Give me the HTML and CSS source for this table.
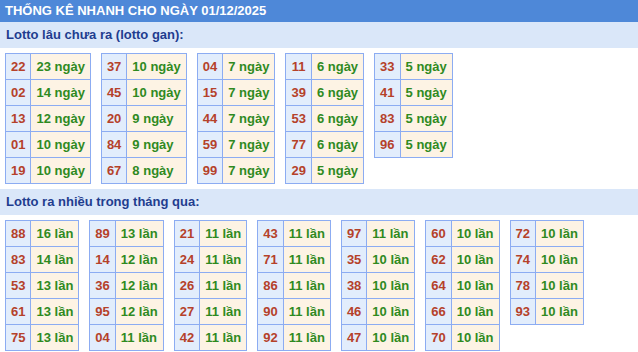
FILE: index.html
```html
<!DOCTYPE html>
<html lang="vi">
<head>
<meta charset="utf-8">
<title>Thống kê nhanh</title>
<link rel="stylesheet" href="styles.css">
</head>
<body>
<div class="title">THỐNG KÊ NHANH CHO NGÀY 01/12/2025</div>

<div class="section">Lotto lâu chưa ra (lotto gan):</div>
<div class="tables">
  <table><tr><td class="n">22</td><td class="v">23 ngày</td></tr><tr><td class="n">02</td><td class="v">14 ngày</td></tr><tr><td class="n">13</td><td class="v">12 ngày</td></tr><tr><td class="n">01</td><td class="v">10 ngày</td></tr><tr><td class="n">19</td><td class="v">10 ngày</td></tr></table>
  <table><tr><td class="n">37</td><td class="v">10 ngày</td></tr><tr><td class="n">45</td><td class="v">10 ngày</td></tr><tr><td class="n">20</td><td class="v">9 ngày</td></tr><tr><td class="n">84</td><td class="v">9 ngày</td></tr><tr><td class="n">67</td><td class="v">8 ngày</td></tr></table>
  <table><tr><td class="n">04</td><td class="v">7 ngày</td></tr><tr><td class="n">15</td><td class="v">7 ngày</td></tr><tr><td class="n">44</td><td class="v">7 ngày</td></tr><tr><td class="n">59</td><td class="v">7 ngày</td></tr><tr><td class="n">99</td><td class="v">7 ngày</td></tr></table>
  <table><tr><td class="n">11</td><td class="v">6 ngày</td></tr><tr><td class="n">39</td><td class="v">6 ngày</td></tr><tr><td class="n">53</td><td class="v">6 ngày</td></tr><tr><td class="n">77</td><td class="v">6 ngày</td></tr><tr><td class="n">29</td><td class="v">5 ngày</td></tr></table>
  <table><tr><td class="n">33</td><td class="v">5 ngày</td></tr><tr><td class="n">41</td><td class="v">5 ngày</td></tr><tr><td class="n">83</td><td class="v">5 ngày</td></tr><tr><td class="n">96</td><td class="v">5 ngày</td></tr></table>
</div>

<div class="section">Lotto ra nhiều trong tháng qua:</div>
<div class="tables">
  <table><tr><td class="n">88</td><td class="v">16 lần</td></tr><tr><td class="n">83</td><td class="v">14 lần</td></tr><tr><td class="n">53</td><td class="v">13 lần</td></tr><tr><td class="n">61</td><td class="v">13 lần</td></tr><tr><td class="n">75</td><td class="v">13 lần</td></tr></table>
  <table><tr><td class="n">89</td><td class="v">13 lần</td></tr><tr><td class="n">14</td><td class="v">12 lần</td></tr><tr><td class="n">36</td><td class="v">12 lần</td></tr><tr><td class="n">95</td><td class="v">12 lần</td></tr><tr><td class="n">04</td><td class="v">11 lần</td></tr></table>
  <table><tr><td class="n">21</td><td class="v">11 lần</td></tr><tr><td class="n">24</td><td class="v">11 lần</td></tr><tr><td class="n">26</td><td class="v">11 lần</td></tr><tr><td class="n">27</td><td class="v">11 lần</td></tr><tr><td class="n">42</td><td class="v">11 lần</td></tr></table>
  <table><tr><td class="n">43</td><td class="v">11 lần</td></tr><tr><td class="n">71</td><td class="v">11 lần</td></tr><tr><td class="n">86</td><td class="v">11 lần</td></tr><tr><td class="n">90</td><td class="v">11 lần</td></tr><tr><td class="n">92</td><td class="v">11 lần</td></tr></table>
  <table><tr><td class="n">97</td><td class="v">11 lần</td></tr><tr><td class="n">35</td><td class="v">10 lần</td></tr><tr><td class="n">38</td><td class="v">10 lần</td></tr><tr><td class="n">46</td><td class="v">10 lần</td></tr><tr><td class="n">47</td><td class="v">10 lần</td></tr></table>
  <table><tr><td class="n">60</td><td class="v">10 lần</td></tr><tr><td class="n">62</td><td class="v">10 lần</td></tr><tr><td class="n">64</td><td class="v">10 lần</td></tr><tr><td class="n">66</td><td class="v">10 lần</td></tr><tr><td class="n">70</td><td class="v">10 lần</td></tr></table>
  <table><tr><td class="n">72</td><td class="v">10 lần</td></tr><tr><td class="n">74</td><td class="v">10 lần</td></tr><tr><td class="n">78</td><td class="v">10 lần</td></tr><tr><td class="n">93</td><td class="v">10 lần</td></tr></table>
</div>
</body>
</html>
```
FILE: styles.css
```css
html, body {
  margin: 0;
  padding: 0;
  background: #ffffff;
  font-family: "Liberation Sans", Arial, sans-serif;
}
.title {
  background: #4e88d8;
  color: #ffffff;
  font-weight: bold;
  font-size: 13px;
  line-height: 22px;
  height: 22px;
  padding-left: 5px;
}
.section {
  background: #dae7f9;
  color: #1f3d8f;
  font-weight: bold;
  font-size: 13px;
  line-height: 26px;
  height: 26px;
  padding-left: 6px;
}
.tables {
  display: flex;
  align-items: flex-start;
  gap: 10px;
  padding: 5px 5px;
}
table {
  border-collapse: collapse;
  font-size: 13px;
  font-weight: bold;
}
td {
  border: 1px solid #8cacf2;
  padding: 0 5px;
  height: 26px;
  box-sizing: border-box;
}
td.n {
  background: #e2edfc;
  color: #b5412a;
  text-align: center;
}
td.v {
  background: #fdf3e4;
  color: #2f8a1f;
  text-align: left;
}
```
